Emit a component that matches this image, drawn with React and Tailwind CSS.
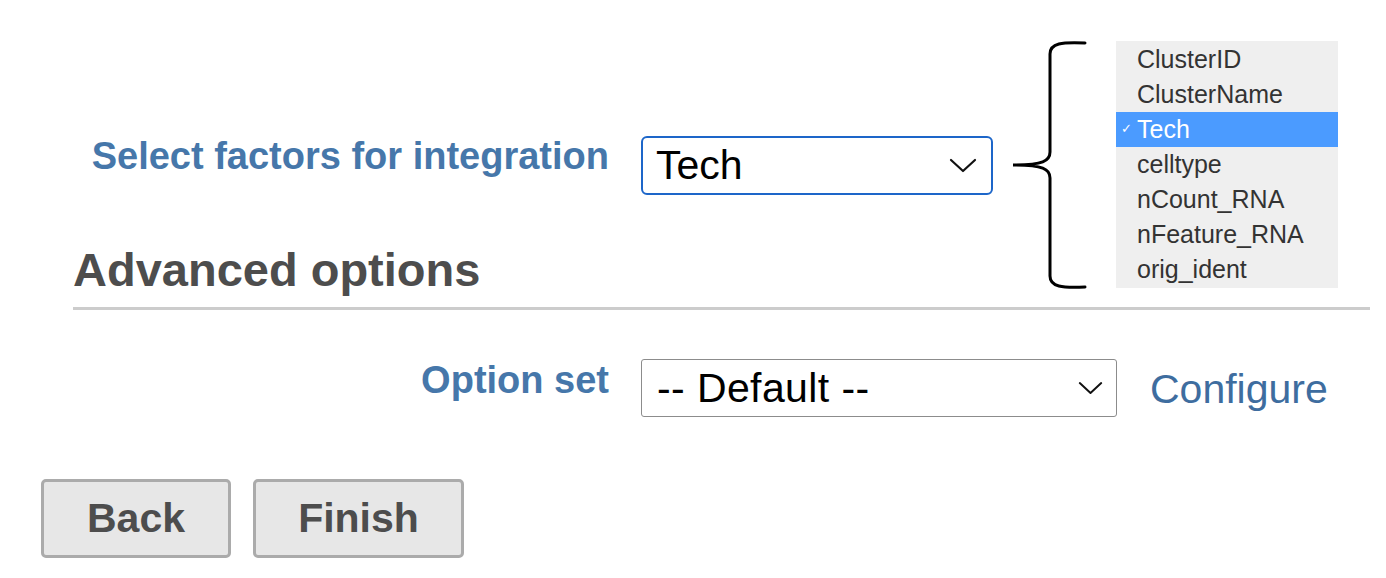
import React from 'react';

const Chevron = ({ w, h }) => (
    <svg width={w} height={h} viewBox="0 0 28 15" fill="none">
        <path d="M2 2 L14 13 L26 2" stroke="#111" strokeWidth="2.2" strokeLinecap="round" strokeLinejoin="round" />
    </svg>
);

const factors = ['ClusterID', 'ClusterName', 'Tech', 'celltype', 'nCount_RNA', 'nFeature_RNA', 'orig_ident'];

const App = () => {
    return (
        <div className="relative w-[1386px] h-[578px] overflow-hidden bg-white font-['Liberation_Sans',Arial,sans-serif]">
            {/* Factor row */}
            <div className="flex items-start pt-[136px]">
                <div className="w-[609px] mt-[1px] text-right text-[38px] leading-[38px] font-bold text-[#4677aa]">
                    Select factors for integration
                </div>
                <div className="ml-[32px] w-[352px] h-[59px] flex items-center justify-between pl-[13px] pr-[14px] border-2 border-[#1d66c9] rounded-[6px]">
                    <span className="text-[41px] leading-none text-black">Tech</span>
                    <Chevron w={28} h={15} />
                </div>
            </div>

            {/* Advanced options */}
            <h2 className="mt-[51px] pl-[73px] text-[47px] leading-[47px] font-bold text-[#4d4d4d]">Advanced options</h2>
            <div className="mt-[14px] ml-[73px] w-[1297px] h-[3px] bg-[#cccccc]" />

            <div className="flex items-start mt-[49px]">
                <div className="w-[609px] mt-[2px] text-right text-[38px] leading-[38px] font-bold text-[#4677aa]">
                    Option set
                </div>
                <div className="ml-[32px] w-[476px] h-[58px] flex items-center justify-between pl-[15px] pr-[13px] border border-[#8c8c8c] rounded-[3px]">
                    <span className="text-[41px] leading-none tracking-[0.4px] text-black">-- Default --</span>
                    <Chevron w={25} h={14} />
                </div>
                <a className="ml-[33px] mt-[10px] text-[41px] leading-[41px] text-[#3e6d9f]">Configure</a>
            </div>

            {/* Buttons */}
            <div className="flex gap-[22px] pl-[41px] mt-[62px]">
                <button className="w-[190px] h-[79px] bg-[#e7e7e7] border-[3px] border-[#ababab] rounded-[5px] text-[41px] font-bold text-[#4d4d4d]">
                    Back
                </button>
                <button className="w-[211px] h-[79px] bg-[#e7e7e7] border-[3px] border-[#ababab] rounded-[5px] text-[41px] font-bold text-[#4d4d4d]">
                    Finish
                </button>
            </div>

            {/* Annotation: expanded factor list */}
            <svg className="absolute left-[1010px] top-[40px]" width="80" height="252" viewBox="0 0 80 252" fill="none">
                <path
                    d="M75 3 C52 2 40 3 40 14 L40 112 C40 121 33 125 3 125 C33 125 40 129 40 138 L40 236 C40 247 52 248 75 247"
                    stroke="#000"
                    strokeWidth="3"
                    strokeLinecap="round"
                />
            </svg>
            <div className="absolute left-[1116px] top-[41px] w-[222px] py-[1px] bg-[#efefef]">
                {factors.map((f) => (
                    <div
                        key={f}
                        className={`relative h-[35px] flex items-center pl-[21px] text-[25px] leading-none ${f === 'Tech' ? 'bg-[#4b9bff] text-white' : 'text-[#333333]'}`}
                    >
                        {f === 'Tech' && <span className="absolute left-[5px] top-[10px] text-[13px] leading-none">✓</span>}
                        {f}
                    </div>
                ))}
            </div>
        </div>
    );
};

export default App;
